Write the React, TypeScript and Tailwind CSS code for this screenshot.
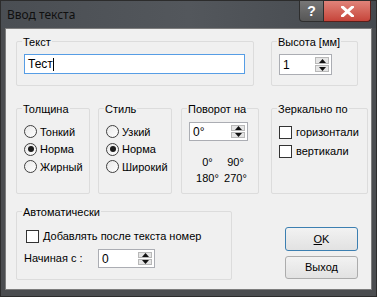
import type { ReactNode } from 'react';

const FONT = { fontFamily: '"Liberation Sans", Arial, sans-serif' };

function Group({ title, className, children }: { title: string; className: string; children?: ReactNode }) {
  return (
    <div className={`shrink-0 border border-[#dcdcdc] rounded-[2px] px-[7px] ${className}`}>
      <div className="-mt-[7px] -ml-[2px] w-fit px-[1px] bg-[#f0f0f0] text-[11px] leading-[14px] text-black whitespace-nowrap">{title}</div>
      {children}
    </div>
  );
}

function Radio({ label, checked }: { label: string; checked?: boolean }) {
  return (
    <div className="flex items-center h-[17.5px] gap-[3px]">
      <span className="shrink-0 w-[13px] h-[13px] rounded-full border border-[#3f3f3f] bg-gradient-to-br from-[#e8e8e8] to-white flex items-center justify-center">
        {checked && <span className="w-[6px] h-[6px] rounded-full bg-[#1b1b1b]" />}
      </span>
      <span className="shrink-0 text-[11px] whitespace-nowrap">{label}</span>
    </div>
  );
}

function Check({ label }: { label: string }) {
  return (
    <div className="flex items-center h-[13px] gap-[4px]">
      <span className="w-[13px] h-[13px] border border-[#333] bg-white shrink-0" />
      <span className="shrink-0 text-[11px] whitespace-nowrap">{label}</span>
    </div>
  );
}

function Spin({ value, className }: { value: string; className: string }) {
  return (
    <div className={`flex border border-[#abadb3] bg-white ${className}`}>
      <span className="flex-1 px-[3px] text-[12px] leading-none flex items-center">{value}</span>
      <div className="w-[16px] flex flex-col py-[2px] pr-[2px] gap-[1px]">
        <span className="flex-1 bg-[#e5e5e5] border border-[#b8b8b8] flex items-center justify-center">
          <svg width="7" height="4" viewBox="0 0 7 4"><path d="M0 4L3.5 0L7 4Z" fill="#111" /></svg>
        </span>
        <span className="flex-1 bg-[#e5e5e5] border border-[#b8b8b8] flex items-center justify-center">
          <svg width="7" height="4" viewBox="0 0 7 4"><path d="M0 0L3.5 4L7 0Z" fill="#111" /></svg>
        </span>
      </div>
    </div>
  );
}

export default function App() {
  return (
    <div className="w-[377px] h-[297px] bg-[#4b4d50] border border-[#2c2c2c] flex flex-col overflow-hidden" style={FONT}>
      {/* Title bar */}
      <div className="h-[27px] flex items-start bg-gradient-to-r from-[#4a4e53] via-[#53575c] to-[#45494e]">
        <span className="pl-[6px] pt-[6px] text-[12px] leading-[16px] text-[#101010]" style={{ fontFamily: '"Noto Sans", "Open Sans", sans-serif' }}>
          Ввод текста
        </span>
        <div className="ml-auto mr-[5px] flex">
          <div className="w-[25px] h-[21px] bg-gradient-to-b from-[#777] to-[#565656] border border-[#2e2e2e] border-t-0 rounded-bl-[4px] flex items-center justify-center text-white font-bold text-[14px]">
            ?
          </div>
          <div className="w-[47px] h-[21px] bg-gradient-to-b from-[#e0837a] to-[#c6443a] border border-[#5a1f1a] border-t-0 border-l-0 rounded-br-[4px] flex items-center justify-center">
            <svg width="13" height="11" viewBox="0 0 13 11">
              <path d="M1.5 1L11.5 10M11.5 1L1.5 10" stroke="#fff" strokeWidth="3" strokeLinecap="square" />
            </svg>
          </div>
        </div>
      </div>

      {/* Client area */}
      <div className="mx-[4px] mb-[6px] flex-1 border border-[#7d7d7d] bg-[#f0f0f0] pl-[10px] text-black">
        <div className="flex mt-[12px]">
          <Group title="Текст" className="w-[238px] h-[45px]">
            <div className="mt-[5px] w-[221px] h-[20px] border border-[#569de5] bg-white flex items-center px-[3px] text-[12px]">
              Тест<span className="w-px h-[13px] bg-black" />
            </div>
          </Group>
          <Group title="Высота [мм]" className="ml-[17px] w-[87px] h-[45px]">
            <Spin value="1" className="mt-[5px] w-[53px] h-[21px]" />
          </Group>
        </div>

        <div className="flex mt-[22px]">
          <Group title="Толщина" className="w-[74px] h-[86px]">
            <div className="mt-[7px]">
              <Radio label="Тонкий" />
              <Radio label="Норма" checked />
              <Radio label="Жирный" />
            </div>
          </Group>
          <Group title="Стиль" className="ml-[8px] w-[74px] h-[86px]">
            <div className="mt-[7px]">
              <Radio label="Узкий" />
              <Radio label="Норма" checked />
              <Radio label="Широкий" />
            </div>
          </Group>
          <Group title="Поворот на" className="ml-[9px] w-[78px] h-[86px]">
            <Spin value="0°" className="mt-[6px] w-[59px] h-[19px]" />
            <div className="mt-[13px] w-[62px] grid grid-cols-2 text-[11px] leading-[16px] text-center">
              <span className="pl-[6px]">0°</span>
              <span>90°</span>
              <span className="pl-[6px]">180°</span>
              <span>270°</span>
            </div>
          </Group>
          <Group title="Зеркально по" className="ml-[12px] w-[97px] h-[86px]">
            <div className="mt-[10px] flex flex-col gap-[6px]">
              <Check label="горизонтали" />
              <Check label="вертикали" />
            </div>
          </Group>
        </div>

        <div className="flex mt-[17px] items-end">
          <Group title="Автоматически" className="w-[216px] h-[69px]">
            <div className="mt-[11px] ml-[2px]">
              <Check label="Добавлять после текста номер" />
            </div>
            <div className="mt-[6px] flex items-center">
              <span className="w-[74px] text-[11px]">Начиная с :</span>
              <Spin value="0" className="w-[57px] h-[19px]" />
            </div>
          </Group>
          <div className="ml-[53px] mb-[1px] flex flex-col gap-[5px]">
            <button className="w-[73px] h-[24px] border border-[#3c7fb1] rounded-[3px] bg-gradient-to-b from-[#f2f2f2] to-[#e2e2e2] text-[11px]">
              <span className="underline">O</span>K
            </button>
            <button className="w-[73px] h-[23px] border border-[#acacac] rounded-[3px] bg-gradient-to-b from-[#f2f2f2] to-[#e2e2e2] text-[11px]">
              Выход
            </button>
          </div>
        </div>
      </div>
    </div>
  );
}
